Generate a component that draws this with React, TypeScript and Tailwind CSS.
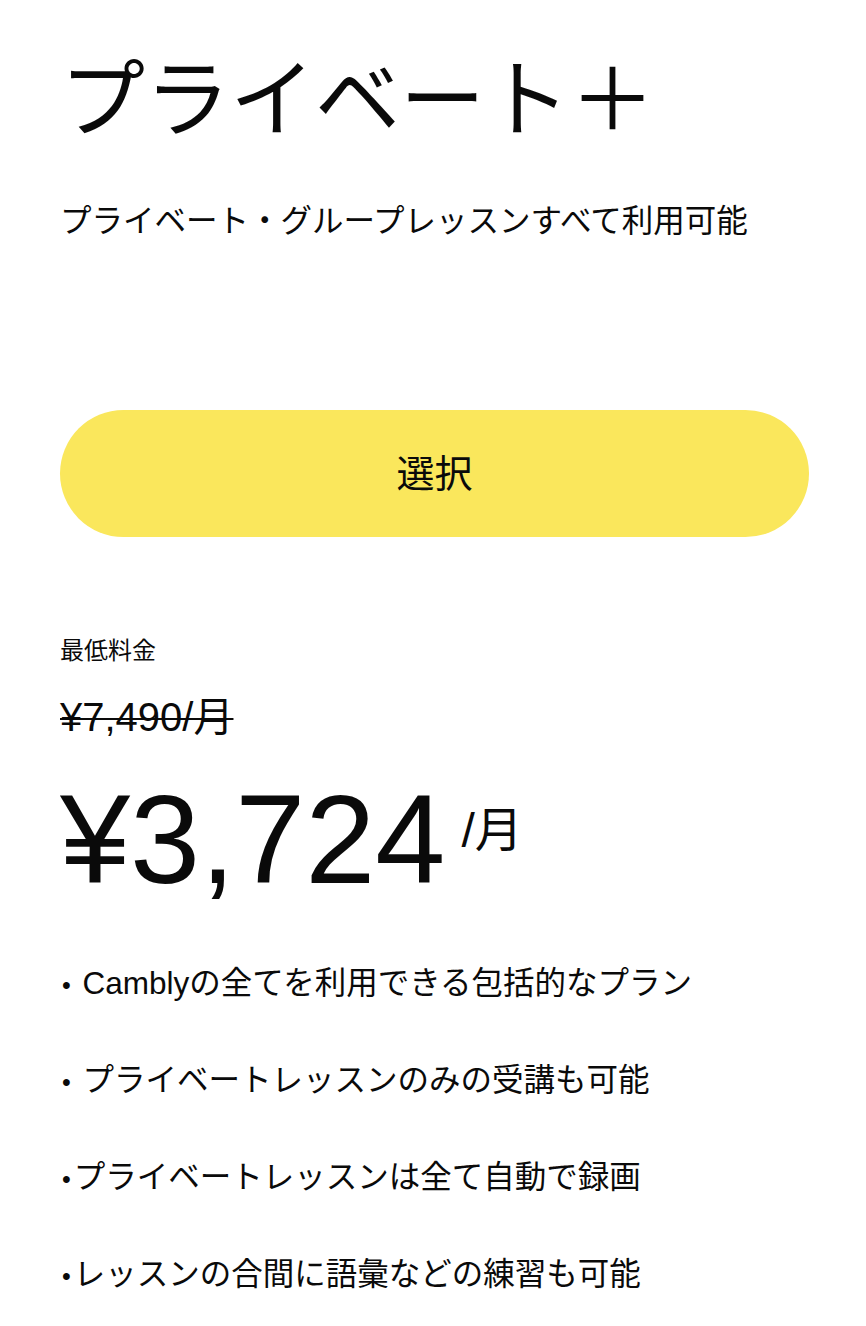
import React from "react";

const font = { fontFamily: '"Liberation Sans", "Noto Sans CJK JP", sans-serif' };

function Dot() {
  return <span className="ml-[2px] mr-[3px] text-[25px]">•</span>;
}

export default function App() {
  return (
    <div className="min-h-[1326px] bg-white text-[#0a0a0a]" style={font}>
      <div className="pl-[60px] pr-[57px] pt-[58px]">
        <h1 className="text-[85px] leading-none font-normal">プライベート＋</h1>
        <p className="mt-[58px] text-[31.5px] leading-[40px]">プライベート・グループレッスンすべて利用可能</p>
        <button className="mt-[169px] flex h-[127px] w-full items-center justify-center rounded-full bg-[#fae75c] text-[38px] leading-none">
          選択
        </button>
        <p className="mt-[98px] text-[24px] leading-[32px]">最低料金</p>
        <p className="mt-[26px] text-[40px] leading-[48px] line-through decoration-[2px]">¥7,490/月</p>
        <div className="mt-[36px] flex items-start">
          <span className="text-[126px] leading-none">¥3,724</span>
          <span className="ml-[16px] mt-[30px] text-[48px] leading-none">/月</span>
        </div>
        <ul className="mt-[33px] flex flex-col text-[31.5px] leading-[95px]">
          <li><Dot /> Camblyの全てを利用できる包括的なプラン</li>
          <li><Dot /> プライベートレッスンのみの受講も可能</li>
          <li><Dot />プライベートレッスンは全て自動で録画</li>
          <li><Dot />レッスンの合間に語彙などの練習も可能</li>
        </ul>
      </div>
    </div>
  );
}
